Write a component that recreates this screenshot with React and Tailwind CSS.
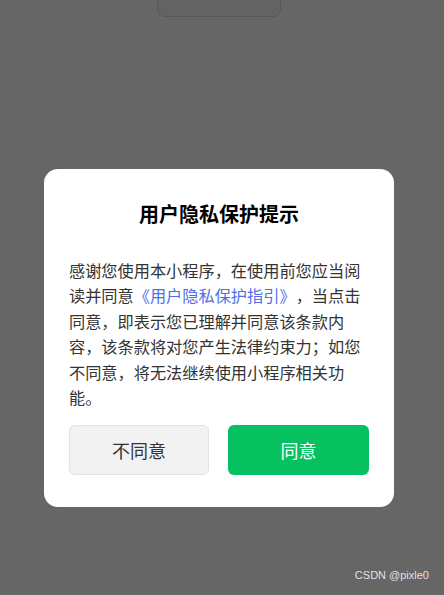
export default function App() {
  return (
    <div className="relative h-[595px] w-[444px] overflow-hidden bg-white [text-spacing-trim:space-all]" style={{ fontFamily: '"Noto Sans CJK SC", "Noto Sans", sans-serif' }}>
      <div className="flex pl-[157px]">
        <button className="-mt-[30px] h-[47px] w-[124px] rounded-[8px] border border-[#dcdcdc] bg-[#f8f8f8] text-[18px] leading-[24px] text-[#222] pb-[9px]">
          重新授权
        </button>
      </div>
      <div className="absolute inset-0 bg-black/60">
        <div className="flex pl-[44px] pt-[169px]">
          <div className="flex w-[350px] flex-col rounded-[14px] bg-white px-[25px] pt-[31px] pb-[32px]">
            <h2 className="text-center text-[20px] font-bold leading-[28px] text-black">用户隐私保护提示</h2>
            <p className="mt-[30px] text-[16.2px] leading-[25.4px] text-[#333]">
              感谢您使用本小程序，在使用前您应当阅读并同意<span className="text-[#4f6fe8]">《用户隐私保护指引》</span>，当点击同意，即表示您已理解并同意该条款内容，该条款将对您产生法律约束力；如您不同意，将无法继续使用小程序相关功能。
            </p>
            <div className="mt-[15px] flex gap-[19px]">
              <button className="h-[50px] w-[140px] rounded-[6px] border border-[#e2e2e2] bg-[#f2f2f2] text-[18px] text-[#333]">不同意</button>
              <button className="h-[50px] flex-1 rounded-[6px] bg-[#07c160] text-[18px] text-white">同意</button>
            </div>
          </div>
        </div>
        <div className="absolute bottom-[12px] right-[15px] text-[11px] text-[#e0e0e0]" style={{ fontFamily: '"Liberation Sans", Arial, sans-serif' }}>CSDN @pixle0</div>
      </div>
    </div>
  );
}
